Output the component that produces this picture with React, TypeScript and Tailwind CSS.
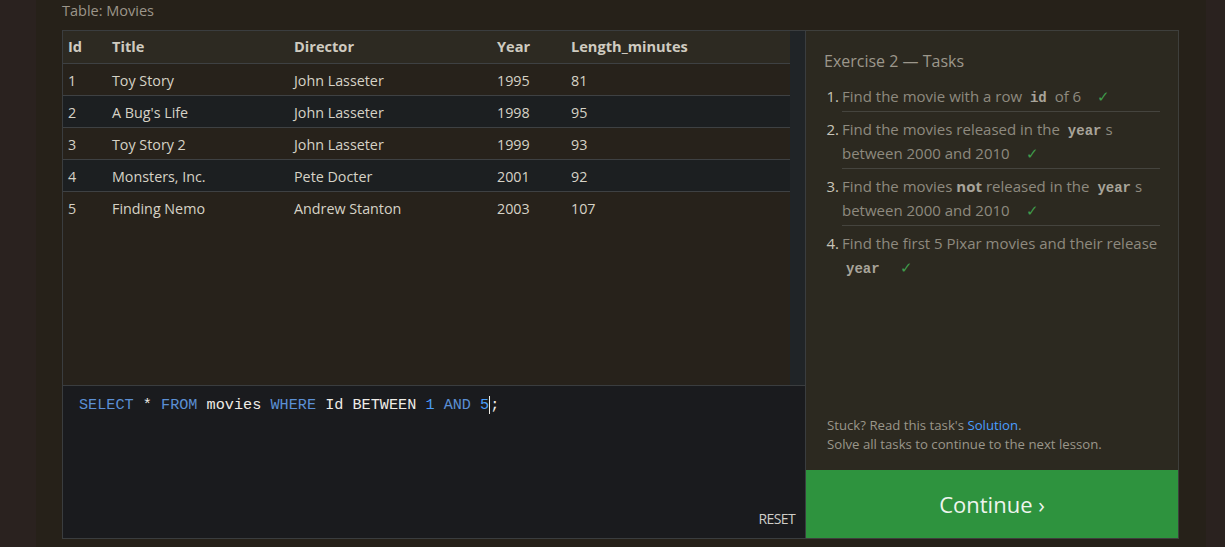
import React from "react";

const rows = [
  { id: 1, title: "Toy Story", director: "John Lasseter", year: 1995, len: 81 },
  { id: 2, title: "A Bug's Life", director: "John Lasseter", year: 1998, len: 95 },
  { id: 3, title: "Toy Story 2", director: "John Lasseter", year: 1999, len: 93 },
  { id: 4, title: "Monsters, Inc.", director: "Pete Docter", year: 2001, len: 92 },
  { id: 5, title: "Finding Nemo", director: "Andrew Stanton", year: 2003, len: 107 },
];

const Check = () => <span className="ml-3 text-[#3f9b4b]">✓</span>;

const Code = ({ children }: { children: React.ReactNode }) => (
  <code className="mx-1 font-['Liberation_Mono',monospace] font-bold text-[14px] leading-none text-[#a8a49a]">
    {children}
  </code>
);

const Task = ({ n, children, last }: { n: number; children: React.ReactNode; last?: boolean }) => (
  <li className="flex">
    <span className="w-[18px] shrink-0 pr-[3px] pt-[5px] text-right leading-[24px] text-[#c9c5b9]">{n}.</span>
    <div className={`flex-1 pt-[5px] pb-[3px] leading-[24px] ${last ? "" : "border-b border-[#45443e]"}`}>
      {children}
    </div>
  </li>
);

export default function App() {
  return (
    <div className="flex h-[547px] w-full overflow-hidden font-['Open_Sans','Noto_Sans',sans-serif]">
      <div className="w-[36px] shrink-0 bg-[#2a221f]" />
      <div className="flex flex-1 flex-col bg-[#262119] pl-[26px] pr-[27px]">
        <div className="h-[30px] pt-[1px] text-[14.5px] leading-[20px] text-[#9c968a]">Table: Movies</div>
        <div className="flex h-[509px]">
          <div className="flex w-[744px] flex-col">
            <div className="flex h-[355px] border border-b-0 border-[#3a3d3f] bg-[#27221b]">
              <div className="flex-1">
                <div className="flex h-[33px] items-center border-b border-[#3e4143] bg-[#2d2a22] text-[14.6px] font-bold text-[#cfcbc0]">
                  <div className="w-[49px] pl-[5px]">Id</div>
                  <div className="w-[182px]">Title</div>
                  <div className="w-[203px]">Director</div>
                  <div className="w-[74px]">Year</div>
                  <div>Length_minutes</div>
                </div>
                {rows.map((r, i) => (
                  <div
                    key={r.id}
                    className={`flex h-[32px] items-center pt-[2px] text-[14.3px] text-[#d6d2c6] ${
                      i % 2 === 1 ? "bg-[#1c1f21]" : "bg-[#27221b]"
                    } ${i < rows.length - 1 ? "border-b border-[#3e4143]" : ""}`}
                  >
                    <div className="w-[49px] pl-[5px]">{r.id}</div>
                    <div className="w-[182px]">{r.title}</div>
                    <div className="w-[203px]">{r.director}</div>
                    <div className="w-[74px]">{r.year}</div>
                    <div>{r.len}</div>
                  </div>
                ))}
              </div>
              <div className="w-[15px] bg-[#202427]" />
            </div>
            <div className="relative flex-1 border border-[#3a3d3f] bg-[#1a1b1e] px-[16px] pt-[9px]">
              <pre className="font-['Liberation_Mono',monospace] text-[15.2px] leading-[20px] text-[#eeece6]">
                <span className="text-[#5b8fd4]">SELECT</span> * <span className="text-[#5b8fd4]">FROM</span> movies{" "}
                <span className="text-[#5b8fd4]">WHERE</span> Id BETWEEN <span className="text-[#4a9df5]">1</span>{" "}
                <span className="text-[#5b8fd4]">AND</span> <span className="text-[#4a9df5]">5</span>
                <span className="border-l border-[#eeece6]">;</span>
              </pre>
              <div className="absolute bottom-[9px] right-[10px] text-[14px] tracking-[-0.6px] text-[#cfcdc8]">RESET</div>
            </div>
          </div>
          <div className="flex w-[373px] flex-col border border-l-0 border-[#3e3f3c] bg-[#2c2920]">
            <div className="flex flex-1 flex-col px-[18px] pt-[19px]">
              <div className="text-[16px] leading-[22px] text-[#9c978b]">Exercise 2 — Tasks</div>
              <ol className="mt-[7px] text-[15px] text-[#8e8a7f]">
                <Task n={1}>
                  Find the movie with a row <Code>id</Code> of 6 <Check />
                </Task>
                <Task n={2}>
                  Find the movies released in the <Code>year</Code>s between 2000 and 2010 <Check />
                </Task>
                <Task n={3}>
                  Find the movies <b className="text-[#a8a49a]">not</b> released in the <Code>year</Code>s between 2000 and 2010{" "}
                  <Check />
                </Task>
                <Task n={4} last>
                  Find the first 5 Pixar movies and their release <Code>year</Code> <Check />
                </Task>
              </ol>
              <div className="mt-auto pb-[16px] pl-[3px] text-[13.2px] leading-[19px] text-[#9a968a]">
                <div>
                  Stuck? Read this task's <span className="text-[#4a9eff]">Solution</span>.
                </div>
                <div>Solve all tasks to continue to the next lesson.</div>
              </div>
            </div>
            <div className="flex h-[68px] items-center justify-center bg-[#2e933e] text-[22px] text-[#eef5ee]">
              Continue ›
            </div>
          </div>
        </div>
      </div>
      <div className="w-[19px] shrink-0 bg-[#2a221f]" />
    </div>
  );
}
